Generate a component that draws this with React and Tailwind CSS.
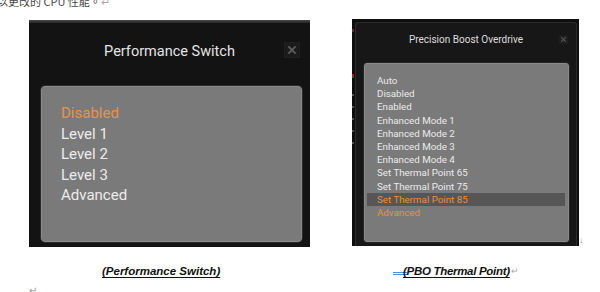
import { useState } from 'react';

const CloseIcon = ({ size, stroke }) => (
  <svg width={size} height={size} viewBox="0 0 16 16">
    <path d="M4.5 4.5 L11.5 11.5 M11.5 4.5 L4.5 11.5" stroke={stroke} strokeWidth="2" strokeLinecap="square" />
  </svg>
);

const switchOptions = ['Disabled', 'Level 1', 'Level 2', 'Level 3', 'Advanced'];

const pboOptions = [
  'Auto',
  'Disabled',
  'Enabled',
  'Enhanced Mode 1',
  'Enhanced Mode 2',
  'Enhanced Mode 3',
  'Enhanced Mode 4',
  'Set Thermal Point 65',
  'Set Thermal Point 75',
  'Set Thermal Point 85',
  'Advanced',
];

const PerformanceSwitch = () => {
  const [selected] = useState('Disabled');

  return (
    <div className="mt-[1px] ml-[29px] flex h-[227px] w-[281px] shrink-0 flex-col bg-[#131313]">
      {/* textured top strip */}
      <div className="h-[3px] bg-gradient-to-b from-[#4a4a4a] to-[#262626]" />

      {/* Header */}
      <div className="relative flex h-[63px] justify-center pt-[20px]">
        <span className="text-[14.5px] leading-[18px] text-[#e4e4e4]">Performance Switch</span>
        <div className="absolute top-[19px] right-[10px] flex h-[16px] w-[16px] items-center justify-center border border-[#202020] bg-[#1b1b1b]">
          <CloseIcon size={14} stroke="#5e5e5e" />
        </div>
      </div>

      {/* Option list */}
      <div className="ml-[12px] h-[156px] w-[261px] rounded-[4px] border border-[#8a8a8a] bg-[#7a7a7a] pt-[16px] pl-[19px] shadow-[0_0_0_1px_#2a2a2a]">
        {switchOptions.map((opt) => (
          <div
            key={opt}
            className={`text-[15px] leading-[20.5px] ${opt === selected ? 'text-[#e3944f]' : 'text-[#ececec]'}`}
          >
            {opt}
          </div>
        ))}
      </div>
    </div>
  );
};

const PboDialog = () => {
  const [selected] = useState('Set Thermal Point 85');

  return (
    <div className="ml-[42px] flex h-[227px] w-[227px] shrink-0 bg-[#0e0e0e]">
      {/* bits of the app behind the dialog */}
      <div className="flex w-[3px] flex-col items-start">
        <span className="mt-[10px] h-[3px] w-[2px] bg-[#8a1e1e]" />
        <span className="mt-[42px] h-[4px] w-[2px] bg-[#9a2222]" />
        <span className="mt-[16px] h-[2px] w-[2px] bg-[#555]" />
        <span className="mt-[10px] h-[2px] w-[2px] bg-[#555]" />
        <span className="mt-[10px] h-[2px] w-[2px] bg-[#555]" />
        <span className="mt-[10px] h-[2px] w-[2px] bg-[#555]" />
        <span className="mt-[10px] h-[2px] w-[2px] bg-[#555]" />
      </div>

      <div className="mt-[3px] flex h-[224px] w-[222px] flex-col rounded-t-[3px] border border-b-0 border-[#2c2c2c] bg-[#171717]">
        {/* Header */}
        <div className="relative flex h-[40px] justify-center pt-[11px]">
          <span className="text-[10px] leading-[12px] text-[#dedede]">Precision Boost Overdrive</span>
          <div className="absolute top-[12px] right-[8px] flex h-[9px] w-[9px] items-center justify-center bg-[#1e1e1e]">
            <CloseIcon size={9} stroke="#555" />
          </div>
        </div>

        {/* Option list */}
        <div className="ml-[8px] h-[179px] w-[205px] rounded-[3px] border border-[#8a8a8a] bg-[#7a7a7a] pt-[10px] shadow-[0_0_0_1px_#252525]">
          {pboOptions.map((opt) => {
            const active = opt === selected;
            const orange = active || opt === 'Advanced';
            return (
              <div
                key={opt}
                className={`mr-[3px] ml-[2px] pl-[10px] text-[9.75px] leading-[13.2px] ${active ? 'bg-[#565656]' : ''} ${orange ? 'text-[#e8923f]' : 'text-[#ebebeb]'}`}
              >
                {opt}
              </div>
            );
          })}
        </div>
      </div>
    </div>
  );
};

export default function App() {
  return (
    <div className="h-[292px] w-[600px] overflow-hidden bg-white font-['Roboto',sans-serif]">
      {/* Cut-off line of document text */}
      <div className="h-[19px] overflow-hidden">
        <p className="-mt-[4px] -ml-[3px] font-['Noto_Sans_CJK_TC',sans-serif] text-[11px] leading-[11px] text-[#444]">
          以更改的 CPU 性能。<span className="text-[#aaa]">↵</span>
        </p>
      </div>

      {/* Screenshots */}
      <div className="flex items-start">
        <PerformanceSwitch />
        <PboDialog />
        <span className="mt-[216px] text-[9px] leading-[10px] text-[#9a9a9a]">↓</span>
      </div>

      {/* Captions */}
      <div className="mt-[17px] flex font-['Liberation_Sans',sans-serif] text-[11.5px] leading-[14px] font-bold italic text-[#111]">
        <div className="w-[340px] pl-[102px]">
          <span className="underline underline-offset-2">(Performance Switch)</span>
        </div>
        <div className="flex items-start pl-[53px]">
          <span className="mt-[8px] -mr-[4px] h-[3px] w-[14px] border-y border-[#5a8ad6]" />
          <span className="tracking-[-0.3px] underline underline-offset-2">(PBO Thermal Point)</span>
          <span className="ml-[1px] font-normal not-italic text-[9px] text-[#aaa]">↵</span>
        </div>
      </div>

      <div className="mt-[8px] pl-[29px] text-[10px] leading-[10px] text-[#999]">↵</div>
    </div>
  );
}
